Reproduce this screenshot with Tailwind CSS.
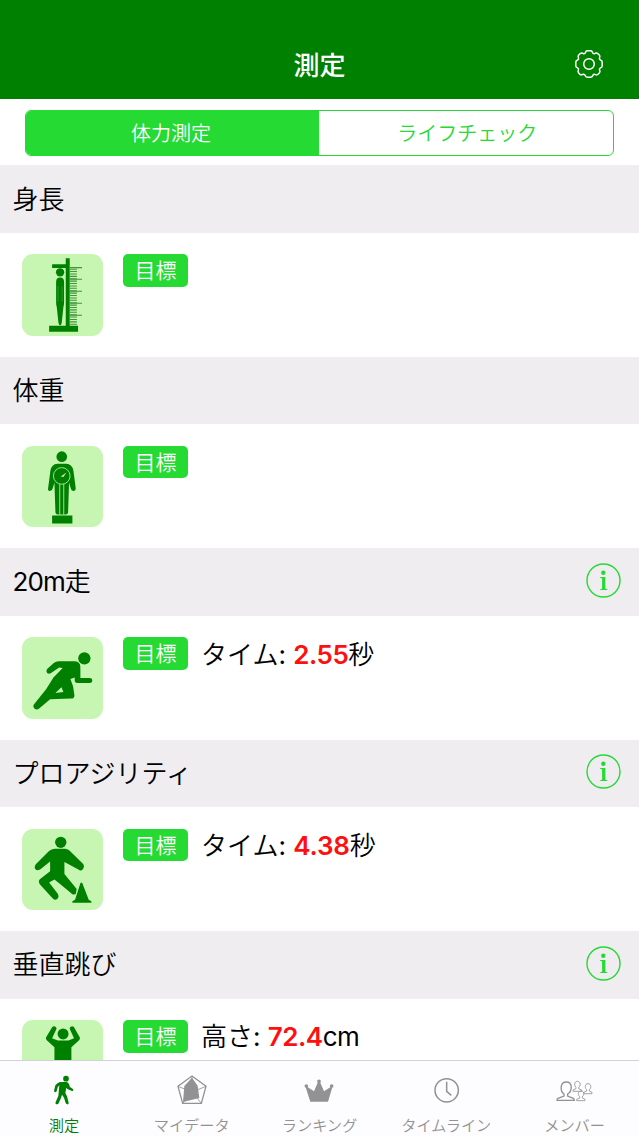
<!DOCTYPE html>
<html lang="ja">

<head>
  <meta charset="UTF-8">
  <meta name="viewport" content="width=device-width, initial-scale=1.0">
  <script src="https://cdn.jsdelivr.net/npm/@tailwindcss/browser@4"></script>
  <title>測定</title>
</head>

<body class="font-['Inter','Noto_Sans_CJK_JP',sans-serif] text-black bg-white">
  <div class="h-[1136px] w-[639px] flex flex-col overflow-hidden">

    <!-- Header -->
    <header class="h-[99px] shrink-0 bg-[#008000] grid grid-cols-3 items-center px-9 pt-[31px]">
      <span></span>
      <h1 class="text-center text-white text-[26px] leading-none font-medium pt-px">測定</h1>
      <svg class="w-7 h-7 justify-self-end mb-[2px]" viewBox="0 0 28 28" fill="none" stroke="#fff" stroke-width="1.5" stroke-linejoin="round">
        <circle cx="14" cy="14" r="5.3" />
        <path d="M10.6 2.3 Q11 .9 12.3 .8 H15.7 Q17 .9 17.4 2.3 Q17.9 3.8 19.3 3.7 L20.8 3.1 Q22 2.9 23 3.8 L24.5 5.3 Q25.2 6.2 24.6 7.5 Q23.9 9 25.3 10 Q27.2 10.5 27.2 12.3 V15.7 Q27.2 17.4 25.5 17.9 Q24 18.6 24.6 20.2 Q25.4 21.6 24.5 22.7 L23 24.3 Q21.9 25.3 20.5 24.6 Q18.8 23.8 17.8 25.4 Q17.5 27.1 15.7 27.2 H12.3 Q10.6 27.1 10.2 25.4 Q9.3 23.8 7.6 24.5 Q6.1 25.2 5 24.3 L3.5 22.7 Q2.6 21.6 3.4 20.2 Q4 18.6 2.5 17.9 Q.8 17.4 .8 15.7 V12.3 Q.8 10.5 2.7 10 Q4.1 9 3.4 7.5 Q2.8 6.2 3.5 5.3 L5 3.8 Q6 2.9 7.2 3.1 L8.7 3.7 Q10.1 3.8 10.6 2.3 Z" />
      </svg>
    </header>

    <!-- Segment -->
    <div class="h-[66.3px] shrink-0 pl-[24.5px] pr-[25px] pt-[10.5px]">
      <div class="h-[46px] flex rounded-[6px] border-[1.5px] border-[#24da33] overflow-hidden text-xl font-[350]">
        <div class="w-[293px] bg-[#24da33] text-white flex items-center justify-center pr-[2px] pt-[2px]">体力測定</div>
        <div class="flex-1 text-[#24da33] flex items-center justify-center pl-[3px] pt-[2px]">ライフチェック</div>
      </div>
    </div>

    <!-- List -->
    <main class="flex-1 min-h-0 overflow-hidden text-[26px] leading-none font-[350]">
      <section>
        <div class="h-[67.7px] bg-[#efedf0] flex items-center justify-between pl-[12.5px] pr-[18px]">
          <h2 class="pt-px">身長</h2>
        </div>
        <div class="h-[123.75px] flex items-start pl-[21.5px] pt-[21.5px]">
          <svg class="w-[81.5px] h-[81.5px] rounded-[11px] bg-[#c7f5b2]" viewBox="36 28 244 245" fill="#008000">
            <path d="M126 59h41V41h12v203h25v18h-87v-18h50V70h-41z" />
            <circle cx="150" cy="83" r="12.5" />
            <path d="M150 99q12 0 12 13v62q0 7-2 13l-5 48q-2 8-5 8t-5-8l-5-48q-2-6-2-13v-62q0-13 12-13z" />
            <path d="M144 125v46M156 125v46" stroke="#5fb052" stroke-width="1.5" />
            <path d="M179 69h37M179 104h37M179 140h37M179 176h37M179 212h37" stroke="#3f963b" stroke-width="3.5" />
            <path d="M190 72v172" stroke="#3f963b" stroke-width="21" stroke-dasharray="3.2 4" />
          </svg>
          <span class="ml-5 h-[32.5px] w-[65px] rounded-[5px] bg-[#24da33] text-white text-[21px] flex items-center justify-center">目標</span>
        </div>
      </section>

      <section>
        <div class="h-[67.7px] bg-[#efedf0] flex items-center justify-between pl-[12.5px] pr-[18px]">
          <h2 class="pt-px">体重</h2>
        </div>
        <div class="h-[123.75px] flex items-start pl-[21.5px] pt-[21.5px]">
          <svg class="w-[81.5px] h-[81.5px] rounded-[11px] bg-[#c7f5b2]" viewBox="36 28 244 245" fill="#008000">
            <circle cx="155" cy="60" r="16" />
            <path d="M142 81H168Q187 82 190 102L197 155Q197 163 190 163T182 155L177 138 174 228Q173 234 167 234H143Q137 234 136 228L133 138 128 155Q126 163 119 163T114 155L121 102Q124 82 142 81Z" />
            <circle cx="155" cy="118" r="25" stroke="#a5dc92" stroke-width="3" />
            <path d="M149 142v95M161 142v95" stroke="#a5dc92" stroke-width="3" />
            <path d="M152 120l17-12-9 13z" fill="#c7f5b2" />
            <path d="M126 237h61v24h-61z" />
          </svg>
          <span class="ml-5 h-[32.5px] w-[65px] rounded-[5px] bg-[#24da33] text-white text-[21px] flex items-center justify-center">目標</span>
        </div>
      </section>

      <section>
        <div class="h-[67.7px] bg-[#efedf0] flex items-center justify-between pl-[12.5px] pr-[18px]">
          <h2><span class="font-normal tracking-[-0.9px]">20m</span>走</h2>
          <svg class="w-[35px] h-[35px] mb-[3px]" viewBox="0 0 35 35" fill="#24da33">
            <circle cx="17.5" cy="17.5" r="16.5" fill="none" stroke="#24da33" stroke-width="1.4" />
            <circle cx="17.3" cy="9.8" r="2.2" />
            <path d="M14.2 14.1h5.2v11.7l1.8.5v.8h-7v-.8l1.9-.5V15.3l-1.9-.4z" />
          </svg>
        </div>
        <div class="h-[123.75px] flex items-start pl-[21.5px] pt-[21.5px]">
          <svg class="w-[81.5px] h-[81.5px] rounded-[11px] bg-[#c7f5b2]" viewBox="36 28 244 245" fill="#008000">
            <circle cx="223" cy="92" r="18.500" />
            <path d="M146 101H192Q211 101 211 119V151H240Q247 152 247 159T240 166H202Q194 166 194 158V150L181 154 189 176 193 202Q194 213 183 213L120 215 88 242Q80 249 73 243T73 229L108 185 130 150 158 121 147 120 123 136Q116 141 111 136T111 124L131 106Q137 101 146 101Z" />
            <path d="M154 179l-18 17 24-3z" fill="#c7f5b2" />
          </svg>
          <span class="ml-5 h-[32.5px] w-[65px] rounded-[5px] bg-[#24da33] text-white text-[21px] flex items-center justify-center">目標</span>
          <p class="ml-[13px] h-[32.5px] pt-[2px] flex items-center whitespace-pre">タイム<span class="font-normal">: </span><b class="font-semibold text-[#ff0f0f] tracking-[-0.5px]">2.55</b>秒</p>
        </div>
      </section>

      <section>
        <div class="h-[67.7px] bg-[#efedf0] flex items-center justify-between pl-[12.5px] pr-[18px]">
          <h2 class="pt-px">プロアジリティ</h2>
          <svg class="w-[35px] h-[35px] mb-[3px]" viewBox="0 0 35 35" fill="#24da33">
            <circle cx="17.5" cy="17.5" r="16.5" fill="none" stroke="#24da33" stroke-width="1.4" />
            <circle cx="17.3" cy="9.8" r="2.2" />
            <path d="M14.2 14.1h5.2v11.7l1.8.5v.8h-7v-.8l1.9-.5V15.3l-1.9-.4z" />
          </svg>
        </div>
        <div class="h-[123.75px] flex items-start pl-[21.5px] pt-[21.5px]">
          <svg class="w-[81.5px] h-[81.5px] rounded-[11px] bg-[#c7f5b2]" viewBox="36 28 244 245" fill="#008000">
            <circle cx="152" cy="68" r="17" />
            <path d="M134 87H165Q172 87 178 93L218 132Q225 140 219 148T205 150L163 127V163L200 208 197 224 188 225 150 193 133 180 117 189 143 223Q148 232 142 238T128 237L89 194Q83 184 90 178L120 155V126L91 149Q81 155 76 149T77 134L116 95Q124 87 134 87Z" />
            <path d="M211 191q3-5 6 0l19 50 8 4v5h-57v-5l8-4z" />
          </svg>
          <span class="ml-5 h-[32.5px] w-[65px] rounded-[5px] bg-[#24da33] text-white text-[21px] flex items-center justify-center">目標</span>
          <p class="ml-[13px] h-[32.5px] pt-[2px] flex items-center whitespace-pre">タイム<span class="font-normal">: </span><b class="font-semibold text-[#ff0f0f] tracking-[-0.2px]">4.38</b>秒</p>
        </div>
      </section>

      <section>
        <div class="h-[67.7px] bg-[#efedf0] flex items-center justify-between pl-[12.5px] pr-[18px]">
          <h2 class="pt-px">垂直跳び</h2>
          <svg class="w-[35px] h-[35px] mb-[3px]" viewBox="0 0 35 35" fill="#24da33">
            <circle cx="17.5" cy="17.5" r="16.5" fill="none" stroke="#24da33" stroke-width="1.4" />
            <circle cx="17.3" cy="9.8" r="2.2" />
            <path d="M14.2 14.1h5.2v11.7l1.8.5v.8h-7v-.8l1.9-.5V15.3l-1.9-.4z" />
          </svg>
        </div>
        <div class="h-[123.75px] flex items-start pl-[21.5px] pt-[21.5px]">
          <svg class="w-[81.5px] h-[81.5px] rounded-[11px] bg-[#c7f5b2]" viewBox="36 30 244 245" fill="#008000">
            <circle cx="159" cy="72" r="16.500" />
            <path d="M126 52q4-5 10-2 5 3 2 9l-12 26 17 7h32l17-7-12-26q-3-6 2-9 6-3 10 2l17 30q2 5-2 9l-23 21v50h-51v-50l-23-21q-4-4-2-9z" />
          </svg>
          <span class="ml-5 h-[32.5px] w-[65px] rounded-[5px] bg-[#24da33] text-white text-[21px] flex items-center justify-center">目標</span>
          <p class="ml-[13px] h-[32.5px] pt-[2px] flex items-center whitespace-pre">高さ<span class="font-normal">: </span><b class="font-semibold text-[#ff0f0f] tracking-[-0.5px]">72.4</b><span class="font-normal tracking-[-0.5px]">cm</span></p>
        </div>
      </section>
    </main>

    <!-- Tab bar -->
    <nav class="h-[76px] shrink-0 border-t border-[#d3d1d4] bg-[#fdfcfe] grid grid-cols-5 text-[15.2px] leading-none font-[350] text-[#929292]">
      <a class="flex flex-col items-center pt-[11px] gap-2 text-[#008000]">
        <svg class="w-10 h-[38px]" viewBox="0 0 120 114" fill="currentColor">
          <circle cx="66" cy="20" r="8.500" />
          <path d="M48 30H68Q73 31 75 37L78 45 86 50Q89 53 87 57L84 57 70 51 67 47 64 63 69 73 74 92Q74 98 70 97T65 93L60 77 54 68 50 80 43 95Q39 98 36 96T35 90L43 72 46 40 41 46 38 58Q35 62 32 60L30 57 34 40Q40 33 48 30Z" />
        </svg>
        <span>測定</span>
      </a>
      <a class="flex flex-col items-center pt-[11px] gap-2">
        <svg class="w-10 h-[38px]" viewBox="0 0 120 114" fill="none" stroke="#929292" stroke-width="4">
          <path d="M60 12L102 43 88 94H32L18 43z" />
          <path d="M60 12V60M102 43L60 60 88 94M60 60L32 94M18 43L60 60" stroke-width="2.500" />
          <path d="M60 17L77 41 82 78 33 90 37 42z" fill="#929292" stroke="none" />
        </svg>
        <span>マイデータ</span>
      </a>
      <a class="flex flex-col items-center pt-[11px] gap-2">
        <svg class="w-10 h-[38px]" viewBox="0 0 120 114" fill="#929292">
          <circle cx="60" cy="28" r="5.500" />
          <circle cx="22" cy="42" r="5.500" />
          <circle cx="98" cy="42" r="5.500" />
          <path d="M57 30h6l12 28 21-14 4 2-13 43H34L20 46l4-2 21 14z" />
        </svg>
        <span>ランキング</span>
      </a>
      <a class="flex flex-col items-center pt-[11px] gap-2">
        <svg class="w-10 h-[38px]" viewBox="0 0 120 114" fill="none" stroke="#929292" stroke-width="4.500">
          <circle cx="59" cy="55" r="35" />
          <path d="M59 29v29l14 12" />
        </svg>
        <span class="pr-[2px]">タイムライン</span>
      </a>
      <a class="flex flex-col items-center pt-[11px] gap-2">
        <svg class="w-10 h-[38px]" viewBox="0 0 120 114" fill="none" stroke="#929292" stroke-width="4">
          <path d="M34 30c-20 0-19 28-7 36v6L9 79q-3 2-3 6h52q0-4-3-6l-17-7v-6c14-8 16-36-4-36z" />
          <g stroke-width="2.500">
            <path d="M67 28c-11 0-9 15-4 18v4l-9 4v4h26v-4l-9-4v-4c6-3 7-18-4-18z" />
            <path d="M99 35c-11 0-9 15-4 18v4l-9 4v4h25v-4l-8-4v-4c6-3 7-18-4-18z" />
            <path d="M78 57c-11 0-9 14-4 17v4l-9 4v4h25v-4l-8-4v-4c6-3 7-17-4-17z" />
          </g>
        </svg>
        <span class="pr-px">メンバー</span>
      </a>
    </nav>

  </div>
</body>

</html>
